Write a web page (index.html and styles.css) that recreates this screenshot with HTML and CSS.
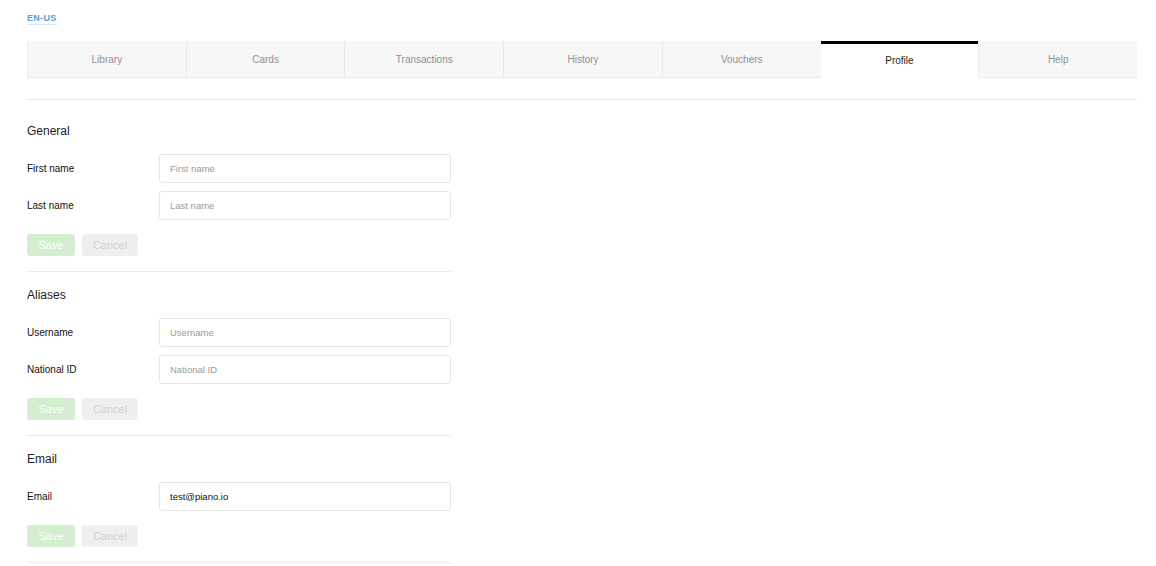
FILE: index.html
```html
<!DOCTYPE html>
<html>

<head>
    <title>Profile</title>

    <link rel="stylesheet" href="styles.css">
</head>

<body>
    <div class="page">
        <div class="lang"><a href="#" class="lang-link">EN-US</a></div>

        <ul class="tabs">
            <li class="tab">Library</li>
            <li class="tab">Cards</li>
            <li class="tab">Transactions</li>
            <li class="tab">History</li>
            <li class="tab">Vouchers</li>
            <li class="tab active">Profile</li>
            <li class="tab">Help</li>
        </ul>

        <div class="tabs-divider"></div>

        <div class="section first">
            <h2 class="section-title">General</h2>
            <div class="rows">
                <div class="row">
                    <label class="row-label">First name</label>
                    <input class="field" type="text" placeholder="First name">
                </div>
                <div class="row">
                    <label class="row-label">Last name</label>
                    <input class="field" type="text" placeholder="Last name">
                </div>
            </div>
            <div class="actions">
                <button class="btn btn-save">Save</button>
                <button class="btn btn-cancel">Cancel</button>
            </div>
        </div>

        <div class="section">
            <h2 class="section-title">Aliases</h2>
            <div class="rows">
                <div class="row">
                    <label class="row-label">Username</label>
                    <input class="field" type="text" placeholder="Username">
                </div>
                <div class="row">
                    <label class="row-label">National ID</label>
                    <input class="field" type="text" placeholder="National ID">
                </div>
            </div>
            <div class="actions">
                <button class="btn btn-save">Save</button>
                <button class="btn btn-cancel">Cancel</button>
            </div>
        </div>

        <div class="section">
            <h2 class="section-title">Email</h2>
            <div class="rows">
                <div class="row">
                    <label class="row-label">Email</label>
                    <input class="field" type="text" value="test@piano.io">
                </div>
            </div>
            <div class="actions">
                <button class="btn btn-save">Save</button>
                <button class="btn btn-cancel">Cancel</button>
            </div>
        </div>
    </div>
</body>

</html>
```

FILE: styles.css
```css
body {
    margin: 0;
    font-family: 'Liberation Sans', Arial, sans-serif;
    background-color: #fff;
    color: #222;
}

.page {
    padding: 12px 19px 0 27px;
}

.lang {
    display: flex;
    height: 13px;
}

.lang-link {
    font-size: 9px;
    line-height: 12px;
    font-weight: bold;
    letter-spacing: 0.3px;
    color: #5b9bd8;
    text-decoration: none;
    border-bottom: 1px solid #d6e6f5;
}

.tabs {
    display: flex;
    list-style: none;
    margin: 16px 0 0;
    padding: 0;
    border-bottom: 1px solid #e8e8e8;
}

.tab {
    flex: 1;
    height: 36px;
    line-height: 37px;
    text-align: center;
    font-size: 10px;
    color: #8f8f8f;
    background-color: #f7f7f7;
    border-left: 1px solid #e8e8e8;
}

.tab:first-child {
    border-left: 1px solid #ececec;
}

.tab.active {
    background-color: #fff;
    color: #222;
    border-top: 3px solid #000;
    border-left: none;
    height: 34px;
    line-height: 33px;
    margin-bottom: -1px;
    position: relative;
}

.tab.active + .tab {
    border-left: 1px solid #ececec;
}

.tabs-divider {
    margin-top: 21px;
    border-top: 1px solid #ececec;
}

.section {
    width: 424px;
    padding-top: 15px;
    border-bottom: 1px solid #ececec;
}

.section.first {
    padding-top: 23px;
}

.section-title {
    margin: 0 0 15px;
    font-size: 12px;
    line-height: 16px;
    font-weight: normal;
    color: #222;
}

.rows {
    display: flex;
    flex-direction: column;
    gap: 8px;
}

.row {
    display: flex;
    align-items: center;
}

.row-label {
    width: 132px;
    font-size: 10px;
    color: #111;
}

.field {
    flex: 1;
    box-sizing: border-box;
    height: 29px;
    padding: 0 10px;
    border: 1px solid #e6e6e6;
    border-radius: 3px;
    font-family: 'Liberation Sans', Arial, sans-serif;
    font-size: 9.5px;
    color: #111;
    outline: none;
}

.field::placeholder {
    color: #9a9a9a;
}

.actions {
    display: flex;
    gap: 7px;
    margin: 14px 0 15px;
}

.btn {
    height: 22px;
    border: none;
    border-radius: 3px;
    font-family: 'Liberation Sans', Arial, sans-serif;
    font-size: 11px;
    padding: 0;
}

.btn-save {
    width: 48px;
    background-color: #d3efd0;
    color: #fff;
}

.btn-cancel {
    width: 56px;
    background-color: #efefef;
    color: #cfcfcf;
}
```
